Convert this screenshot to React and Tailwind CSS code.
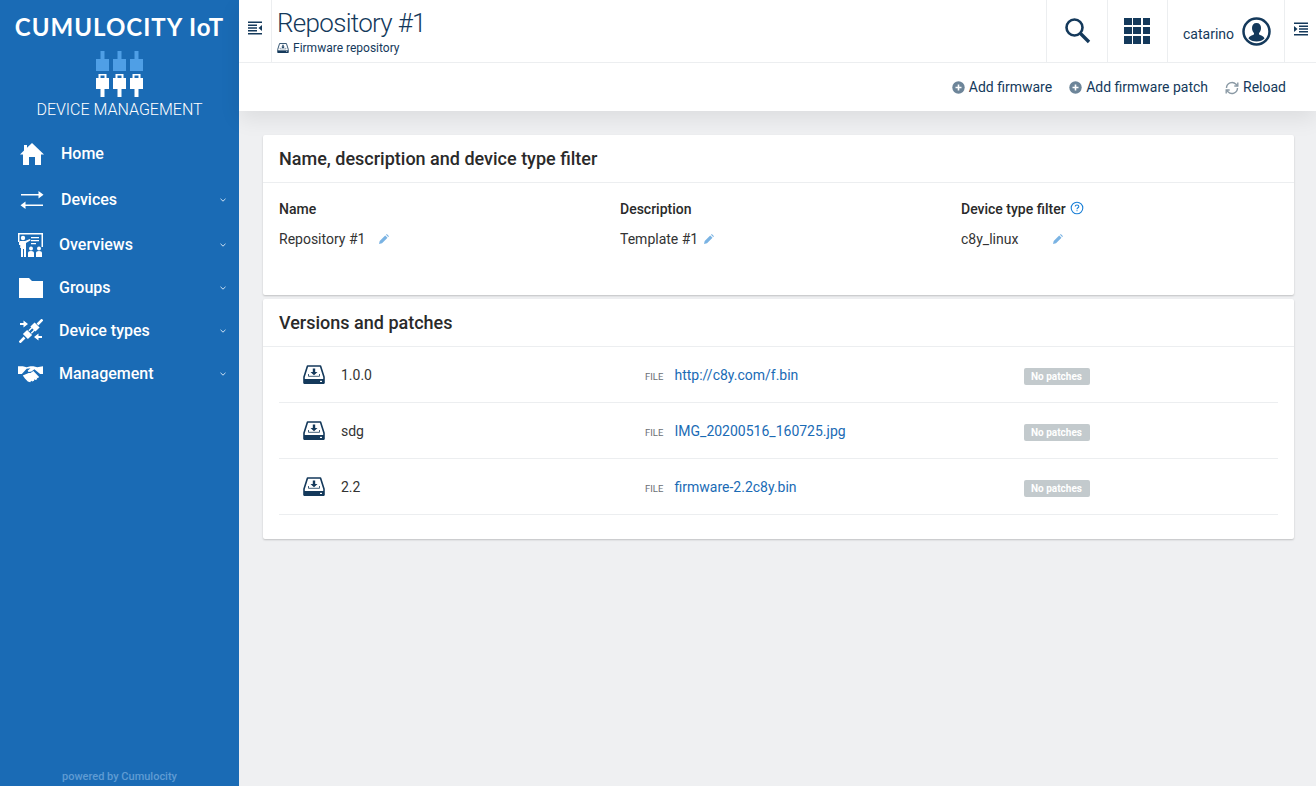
import React from "react";

const navy = "#14395b";

const Chevron = () => (
  <svg width="8" height="6" viewBox="0 0 8 6" className="ml-auto mr-[12px] shrink-0">
    <path d="M1.5 1.8 L4 4.2 L6.5 1.8" fill="none" stroke="#cfe2f3" strokeWidth="1" />
  </svg>
);

const PlugTop = () => (
  <svg width="13" height="20" viewBox="0 0 13 20">
    <path d="M4.500 0h4v8H13v12H0V8h4.500z" fill="#4f9fe6" />
  </svg>
);

const PlugBottom = () => (
  <svg width="13" height="23" viewBox="0 0 13 23">
    <path fillRule="evenodd" d="M2.500 0h8v4H13v11H8.500v8h-4v-8H0V4h2.500zM4.500 1.500v2.500h4V1.500z" fill="#fff" />
  </svg>
);

const HomeIcon = () => (
  <svg width="24" height="22" viewBox="0 0 24 22" fill="#fff">
    <path d="M12 0 L24 11.500 L21 11.500 L21 22 L15 22 L15 14 L9 14 L9 22 L3 22 L3 11.500 L0 11.500 L4 7.600 L4 2 L7 2 L7 4.800 Z" />
  </svg>
);

const DevicesIcon = () => (
  <svg width="24" height="18" viewBox="0 0 24 18" fill="#fff">
    <path d="M1 3h17.500V0L23.500 3.700 18.500 7.400V4.500H1z" />
    <path d="M23 13.500H5.500v-2.900L.5 14.300 5.500 18v-3H23z" />
  </svg>
);

const OverviewsIcon = () => (
  <svg width="25" height="24" viewBox="0 0 25 24" fill="#fff">
    <path d="M0 0h25v14h-1.500V1.500H1.500V9H0z" />
    <circle cx="5" cy="5" r="2.200" />
    <path d="M2 8h5l5-2 .6 1.200L8 10v14H6v-8H5v8H3v-9l-.8 0V12H1V9z" />
    <path d="M13 4h8v1.300h-8zM13 7h8v1.300h-8zM13 10h5v1.300h-5z" />
    <circle cx="13" cy="15.500" r="2" />
    <circle cx="21" cy="15.500" r="2" />
    <path d="M10 24v-4q0-2 3-2t3 2v4zM18 24v-4q0-2 3-2t3 2v4z" />
  </svg>
);

const FolderIcon = () => (
  <svg width="24" height="20" viewBox="0 0 24 20" fill="#fff">
    <path d="M0 0h10l3 3h11v17H0z" />
  </svg>
);

const TypesIcon = () => (
  <svg width="24" height="24" viewBox="0 0 24 24" fill="#fff">
    <path d="M20.600 8.400L15.600 3.400 11.400 7.600 16.400 12.600z" />
    <path d="M13.100 15.900L8.100 10.900 3.900 15.100 8.900 20.100z" />
    <path d="M23.500 .5L18.500 5.500M.5 23.500L5.500 18.500" stroke="#fff" strokeWidth="2.600" />
    <path d="M9.800 11.800L13.300 8.300M12.300 14.300L15.800 10.800" stroke="#fff" strokeWidth="1.300" />
    <path d="M1 4h3.500V1.500L9 5 4.500 8.500V6H1zM23 17h-3.500v-2.500L15 18l4.500 3.500V19H23z" />
  </svg>
);

const ShakeIcon = () => (
  <svg width="25" height="18" viewBox="0 0 26 18" fill="#fff">
    <path d="M0 1l5 0 4 1 4-1 3 0 4 1 6-1v8h-3L17 4l-3 2.500-3 .5-1-1.500L13 3 9 3.500 4 9H0z" />
    <path d="M5 10.500L11 8l2 0 3-2 6 6-1.500 1.500-1-.8.500 1.800-2 .8-1-.8-.3 1.600-2 .6-1-.7-1 1.600-2.500-.8-3-3z" />
  </svg>
);

const NavItem = ({ icon, label, chevron, cls, iconCls, gap }) => (
  <div className={`flex items-center text-white font-medium text-[16px] ${cls}`}>
    <div className={`flex items-center justify-center ${iconCls}`}>{icon}</div>
    <span className={gap}>{label}</span>
    {chevron && <Chevron />}
  </div>
);

const MenuLines = ({ flip }) => (
  <svg width="14" height="14" viewBox="0 0 14 14" fill={navy} style={flip ? { transform: "scaleX(-1)" } : undefined}>
    <path d="M0 .5h14V2H0zM0 3.500h9V5H0zM0 6.250h9v1.500H0zM0 9h9v1.500H0zM0 12h14v1.500H0z" />
    <path d="M14 4v6l-3.500-3z" />
  </svg>
);

const Plus = () => (
  <svg width="13" height="13" viewBox="0 0 13 13">
    <circle cx="6.500" cy="6.500" r="6.200" fill="#6d8599" />
    <path d="M3.500 5.700h2.200V3.500h1.600v2.200h2.200v1.600H7.300v2.200H5.700V7.300H3.500z" fill="#fff" />
  </svg>
);

const Pencil = () => (
  <svg width="10" height="10" viewBox="0 0 10 10" fill="#7ab3e3">
    <path d="M0 10l.7-3L6.200 1.500 8.500 3.800 3 9.300zM7 .8L7.800 0 10 2.200 9.200 3z" />
  </svg>
);

const Drive = ({ w = 22, h = 19 }) => (
  <svg width={w} height={h} viewBox="0 0 22 19" fill="none">
    <path d="M4.500 1h13L21 12v6H1v-6z" stroke={navy} strokeWidth="1.600" strokeLinejoin="round" />
    <path d="M1 14h20v5H1z" fill={navy} />
    <rect x="17" y="15.800" width="2" height="1.200" fill="#fff" />
    <path d="M9.800 3.500h2.400v3.500H14.500L11 10.300 7.500 7h2.300z" fill={navy} />
    <path d="M5.500 9v2.300h11V9" stroke={navy} strokeWidth="0.800" />
  </svg>
);

const Th = ({ children, cls = "" }) => (
  <div className={`text-[14px] font-medium text-[#2a2a2a] leading-[20px] ${cls}`}>{children}</div>
);

const Row = ({ version, file }) => (
  <div className="flex items-center h-[56px] pt-[2px] border-b border-[#eceef0] text-[14px] text-[#333]">
    <div className="w-[62px] pl-[24px] flex items-center shrink-0 -mt-[2px]"><Drive /></div>
    <div className="w-[304px] shrink-0">{version}</div>
    <div className="w-[29.5px] shrink-0 text-[9.5px] text-[#6b7075] pt-[3px]">FILE</div>
    <div className="w-[349.5px] shrink-0 text-[#1a6bb5]">{file}</div>
    <div className="h-[17px] w-[66px] mt-[2px] pr-[1px] rounded-[2px] bg-[#c3cacd] text-white text-[10px] font-bold flex items-center justify-center">No patches</div>
  </div>
);

const Action = ({ icon, label, cls }) => (
  <div className={`flex items-center gap-[4px] ${cls}`}>{icon}<span>{label}</span></div>
);

export default function App() {
  return (
    <div className="flex h-[786px] w-[1316px] overflow-hidden bg-[#eff0f2] font-['Roboto',sans-serif]">
      <aside className="w-[239px] shrink-0 bg-[#1a6bb5] flex flex-col text-white">
        <div className="pt-[12px] flex flex-col items-center h-[131px]">
          <div className="font-['Lato',sans-serif] font-bold text-[24px] leading-[30px] tracking-[1px] whitespace-nowrap">CUMULOCITY IoT</div>
          <div className="mt-[9px] flex gap-[4px]"><PlugTop /><PlugTop /><PlugTop /></div>
          <div className="flex gap-[4px] mt-[3px]"><PlugBottom /><PlugBottom /><PlugBottom /></div>
          <div className="mt-[3px] text-[16px] font-light leading-[20px] whitespace-nowrap">DEVICE MANAGEMENT</div>
        </div>
        <nav className="flex flex-col">
          <NavItem icon={<HomeIcon />} label="Home" cls="h-[46px]" iconCls="w-[24px] ml-[20px]" gap="ml-[17px]" />
          <NavItem icon={<DevicesIcon />} label="Devices" chevron cls="h-[46px]" iconCls="w-[24px] ml-[20px]" gap="ml-[17px]" />
          <NavItem icon={<OverviewsIcon />} label="Overviews" chevron cls="h-[43px]" iconCls="w-[25px] ml-[18px]" gap="ml-[16px]" />
          <NavItem icon={<FolderIcon />} label="Groups" chevron cls="h-[43px]" iconCls="w-[25px] ml-[18px]" gap="ml-[16px]" />
          <NavItem icon={<TypesIcon />} label="Device types" chevron cls="h-[43px]" iconCls="w-[25px] ml-[18px]" gap="ml-[16px]" />
          <NavItem icon={<ShakeIcon />} label="Management" chevron cls="h-[43px]" iconCls="w-[25px] ml-[18px]" gap="ml-[16px]" />
        </nav>
        <div className="mt-auto pb-[2px] text-center text-[11px] leading-[14px] text-[#5f9bd3] font-medium">powered by Cumulocity</div>
      </aside>

      <main className="flex-1 min-w-0 flex flex-col">
        <header className="bg-white h-[111px] shadow-[0_8px_20px_rgba(0,0,0,0.08)] shrink-0 flex flex-col" style={{ color: navy }}>
          <div className="h-[63px] flex border-b border-[#eceef0]">
            <div className="w-[33px] border-r border-[#eceef0] flex justify-center pt-[21px]"><MenuLines /></div>
            <div className="pl-[5px] flex-1 min-w-0">
              <div className="text-[26px] tracking-[-0.7px] font-light leading-[30px] mt-[8px] whitespace-nowrap">Repository #1</div>
              <div className="flex items-center gap-[4px] text-[12px] leading-[14px] mt-[3px]"><Drive w={12} h={10} /><span>Firmware repository</span></div>
            </div>
            <div className="w-[61px] border-l border-[#eceef0] flex items-center justify-center">
              <svg width="28" height="28" viewBox="0 0 28 28" fill="none" stroke={navy}>
                <circle cx="11.500" cy="10.500" r="8" strokeWidth="2.600" />
                <path d="M17.500 16.500 L26 25" strokeWidth="3.400" />
              </svg>
            </div>
            <div className="w-[60px] border-l border-[#eceef0] flex items-center justify-center pr-[1px] pb-[1px]">
              <div className="grid grid-cols-3 gap-[1.75px]">
                {Array.from({ length: 9 }).map((_, i) => <div key={i} className="w-[7.5px] h-[7.5px] bg-[#14395b]" />)}
              </div>
            </div>
            <div className="w-[117px] border-l border-[#eceef0] flex items-center pl-[15px] gap-[8px] text-[14px]">
              <span className="pt-[6px]">catarino</span>
              <svg width="29" height="29" viewBox="0 0 29 29">
                <circle cx="14.500" cy="14.500" r="13" fill="none" stroke={navy} strokeWidth="2.500" />
                <path d="M14.500 6c3 0 4.500 2 4.500 5 0 2.500-1 4-2 5v1.500c2 1 5 1.500 5.500 4-1.800 2-4.500 3-8 3s-6.200-1-8-3c.5-2.500 3.500-3 5.500-4V16c-1-1-2-2.500-2-5 0-3 1.500-5 4.500-5z" fill={navy} />
              </svg>
            </div>
            <div className="flex-1 max-w-[32px] border-l border-[#eceef0] flex justify-center pt-[22px]"><MenuLines flip /></div>
          </div>
          <div className="flex-1 flex items-center justify-end pr-[30px] text-[14px] pt-[1px]">
            <Action icon={<Plus />} label="Add firmware" cls="mr-[17px]" />
            <Action icon={<Plus />} label="Add firmware patch" cls="mr-[17px]" />
            <Action icon={
              <svg width="14" height="14" viewBox="0 0 14 14" fill="none" stroke="#8b9aa5" strokeWidth="1.400">
                <path d="M1.500 7a5.500 5.500 0 0 1 9.500-3.700L12.500 5M12.500 7A5.500 5.500 0 0 1 3 10.700L1.500 9" />
                <path d="M12.800 1.500V5H9.300M1.200 12.500V9h3.500" />
              </svg>
            } label="Reload" cls="" />
          </div>
        </header>

        <div className="pt-[24px] pl-[24px] pr-[22px] flex flex-col gap-[4px]">
          <section className="bg-white rounded-[2px] shadow-[0_1px_2px_rgba(0,0,0,0.2)] h-[160px]">
            <div className="h-[48px] px-[16px] flex items-center border-b border-[#eceef0] text-[18px] font-medium text-[#2a2a2a]">Name, description and device type filter</div>
            <div className="flex pl-[16px] pt-[16px]">
              <div className="w-[341px]">
                <Th>Name</Th>
                <div className="mt-[10px] flex items-center text-[14px] text-[#333] leading-[20px]"><span>Repository #1</span><span className="ml-[14px]"><Pencil /></span></div>
              </div>
              <div className="w-[341px]">
                <Th>Description</Th>
                <div className="mt-[10px] flex items-center text-[14px] text-[#333] leading-[20px]"><span>Template #1</span><span className="ml-[6px]"><Pencil /></span></div>
              </div>
              <div>
                <Th cls="flex items-center gap-[4px]">Device type filter
                  <svg width="14" height="14" viewBox="0 0 14 14" className="-mt-[2px]" fill="none">
                    <circle cx="7" cy="7" r="5.800" stroke="#1a7fd6" strokeWidth="1.100" />
                    <path d="M5.200 5.600C5.200 4.500 6 4 7 4s1.800.6 1.800 1.500C8.800 6.800 7 6.800 7 8.300" stroke="#1a7fd6" strokeWidth="1.100" />
                    <rect x="6.500" y="9.200" width="1" height="1" fill="#1a7fd6" />
                  </svg>
                </Th>
                <div className="mt-[10px] flex items-center text-[14px] text-[#333] leading-[20px]"><span>c8y_linux</span><span className="ml-[35px]"><Pencil /></span></div>
              </div>
            </div>
          </section>
          <section className="bg-white rounded-[2px] shadow-[0_1px_2px_rgba(0,0,0,0.2)] h-[240px]">
            <div className="h-[48px] px-[16px] flex items-center border-b border-[#eceef0] text-[18px] font-medium text-[#2a2a2a]">Versions and patches</div>
            <div className="px-[16px]">
              <Row version="1.0.0" file="http://c8y.com/f.bin" />
              <Row version="sdg" file="IMG_20200516_160725.jpg" />
              <Row version="2.2" file="firmware-2.2c8y.bin" />
            </div>
          </section>
        </div>
      </main>
    </div>
  );
}
